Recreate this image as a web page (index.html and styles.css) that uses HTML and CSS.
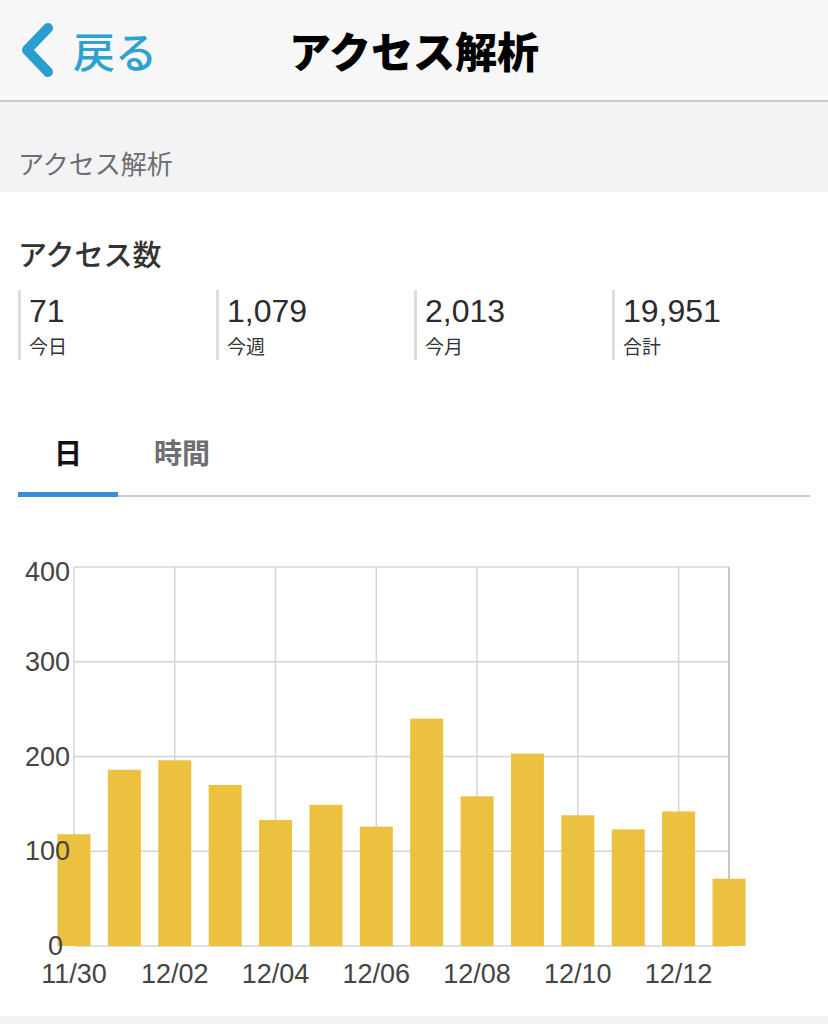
FILE: index.html
```html
<!DOCTYPE html>
<html lang="ja">

<head>
  <meta charset="UTF-8">
  <meta name="viewport" content="width=device-width, initial-scale=1.0">
  <title>アクセス解析</title>
  <link rel="stylesheet" href="styles.css">
</head>

<body>
  <header class="nav-bar">
    <a class="back-btn" href="#">
      <svg class="back-icon" width="40" height="60" viewBox="0 0 40 60">
        <polyline points="30,8 9,30 30,52" fill="none" stroke="#2a9fcf" stroke-width="10" stroke-linecap="round" stroke-linejoin="round"/>
      </svg>
      <span>戻る</span>
    </a>
    <h1 class="nav-title">アクセス解析</h1>
  </header>

  <div class="section-head">アクセス解析</div>

  <div class="panel">
    <h2 class="panel-title">アクセス数</h2>

    <div class="stats">
      <div class="stat">
        <div class="stat-num">71</div>
        <div class="stat-label">今日</div>
      </div>
      <div class="stat">
        <div class="stat-num">1,079</div>
        <div class="stat-label">今週</div>
      </div>
      <div class="stat">
        <div class="stat-num">2,013</div>
        <div class="stat-label">今月</div>
      </div>
      <div class="stat">
        <div class="stat-num">19,951</div>
        <div class="stat-label">合計</div>
      </div>
    </div>

    <div class="tabs">
      <div class="tab active">日</div>
      <div class="tab">時間</div>
    </div>
  </div>

  <div class="chart">
    <svg id="chart" width="828" height="473" viewBox="0 0 828 473"></svg>
  </div>

  <div class="footer-band"></div>

  <script>
    // 日別アクセス数
    const days = ['11/30', '12/01', '12/02', '12/03', '12/04', '12/05', '12/06',
                  '12/07', '12/08', '12/09', '12/10', '12/11', '12/12', '12/13'];
    const values = [118, 186, 196, 170, 133, 149, 126, 240, 158, 203, 138, 123, 142, 71];

    (function drawChart() {
      const svg = document.getElementById('chart');
      const ns = 'http://www.w3.org/2000/svg';
      const plotLeft = 74, plotRight = 729, plotTop = 27, plotBottom = 406;
      const max = 400;
      const step = (plotRight - plotLeft) / 13;
      const scale = (plotBottom - plotTop) / max;

      function el(name, attrs, text) {
        const node = document.createElementNS(ns, name);
        for (const k in attrs) node.setAttribute(k, attrs[k]);
        if (text !== undefined) node.textContent = text;
        svg.appendChild(node);
        return node;
      }

      // グリッド線
      for (let v = 0; v <= max; v += 100) {
        const y = plotBottom - v * scale;
        el('line', { x1: plotLeft, x2: plotRight, y1: y, y2: y, class: 'grid' });
      }
      for (let i = 0; i < days.length; i += 2) {
        const x = plotLeft + i * step;
        el('line', { x1: x, x2: x, y1: plotTop, y2: plotBottom, class: 'grid' });
      }
      el('line', { x1: plotRight, x2: plotRight, y1: plotTop, y2: plotBottom, class: 'grid edge' });

      // 棒グラフ
      values.forEach((v, i) => {
        const x = plotLeft + i * step;
        const h = v * scale;
        el('rect', { x: x - 16.5, y: plotBottom - h, width: 33, height: h, class: 'bar' });
      });

      // 目盛りと日付（棒の上に描く）
      for (let v = 0; v <= max; v += 100) {
        const y = plotBottom - v * scale;
        el('text', { x: v === 0 ? 63 : 70, y: v === max ? y + 5 : y, class: 'y-label' }, v);
      }
      for (let i = 0; i < days.length; i += 2) {
        el('text', { x: plotLeft + i * step, y: 434, class: 'x-label' }, days[i]);
      }
    })();
  </script>
</body>

</html>
```

FILE: styles.css
```css
* {
  margin: 0;
  padding: 0;
  box-sizing: border-box;
}

body {
  width: 828px;
  background-color: white;
  font-family: "Liberation Sans", "Noto Sans CJK JP", sans-serif;
  color: #333;
}

/* ナビゲーションバー */
.nav-bar {
  height: 102px;
  background-color: #f7f7f8;
  border-bottom: 2px solid #cbcbcf;
  display: flex;
  align-items: center;
  position: relative;
}

.back-btn {
  display: flex;
  align-items: center;
  gap: 15px;
  padding-left: 18px;
  color: #2ea2cf;
  text-decoration: none;
  font-family: "Noto Sans CJK JP", sans-serif;
  font-size: 42px;
  font-weight: 500;
  line-height: 1;
}

.back-icon {
  display: block;
}

.nav-title {
  position: absolute;
  left: 0;
  right: 0;
  text-align: center;
  pointer-events: none;
  font-family: "Noto Sans CJK JP", sans-serif;
  font-size: 42px;
  font-weight: 900;
  color: #000;
  line-height: 1;
}

/* セクション見出し */
.section-head {
  height: 90px;
  background-color: #f3f3f6;
  padding: 43px 18px 0;
  font-family: "Noto Sans CJK JP", sans-serif;
  font-size: 26px;
  line-height: 36px;
  color: #6d6d72;
}

.panel {
  padding: 0 18px;
}

.panel-title {
  margin-top: 38px;
  font-family: "Noto Sans CJK JP", sans-serif;
  font-size: 29px;
  font-weight: 500;
  line-height: 46px;
  color: #333;
}

/* アクセス数 */
.stats {
  display: grid;
  grid-template-columns: repeat(4, 1fr);
  margin-top: 14px;
}

.stat {
  height: 70px;
  border-left: 3px solid #dcdcdc;
  padding-left: 8px;
}

.stat-num {
  font-size: 32px;
  line-height: 42px;
  color: #2b2b2b;
}

.stat-label {
  font-family: "Noto Sans CJK JP", sans-serif;
  font-size: 19px;
  line-height: 28px;
  color: #333;
}

/* タブ */
.tabs {
  display: flex;
  margin-top: 72px;
  border-bottom: 2px solid #c8ccd4;
}

.tab {
  padding: 0 36px 23px;
  font-family: "Noto Sans CJK JP", sans-serif;
  font-size: 28px;
  font-weight: 700;
  line-height: 40px;
  color: #6d6d72;
  position: relative;
}

.tab.active {
  color: #111;
}

.tab.active::after {
  content: '';
  position: absolute;
  left: 0;
  right: 0;
  bottom: -2px;
  height: 5px;
  background-color: #3a8ed8;
}

/* グラフ */
.chart {
  margin-top: 43px;
  height: 476px;
}

.chart svg {
  display: block;
}

.grid {
  stroke: #d4d4d4;
  stroke-width: 1.5;
}

.grid.edge {
  stroke: #c8c8c8;
  stroke-width: 2;
}

.bar {
  fill: #ecc140;
}

.y-label,
.x-label {
  font-family: "Liberation Sans", sans-serif;
  font-size: 27px;
  fill: #444;
  dominant-baseline: central;
}

.y-label {
  text-anchor: end;
}

.x-label {
  text-anchor: middle;
}

.footer-band {
  height: 20px;
  background-color: #f3f3f6;
}
```
